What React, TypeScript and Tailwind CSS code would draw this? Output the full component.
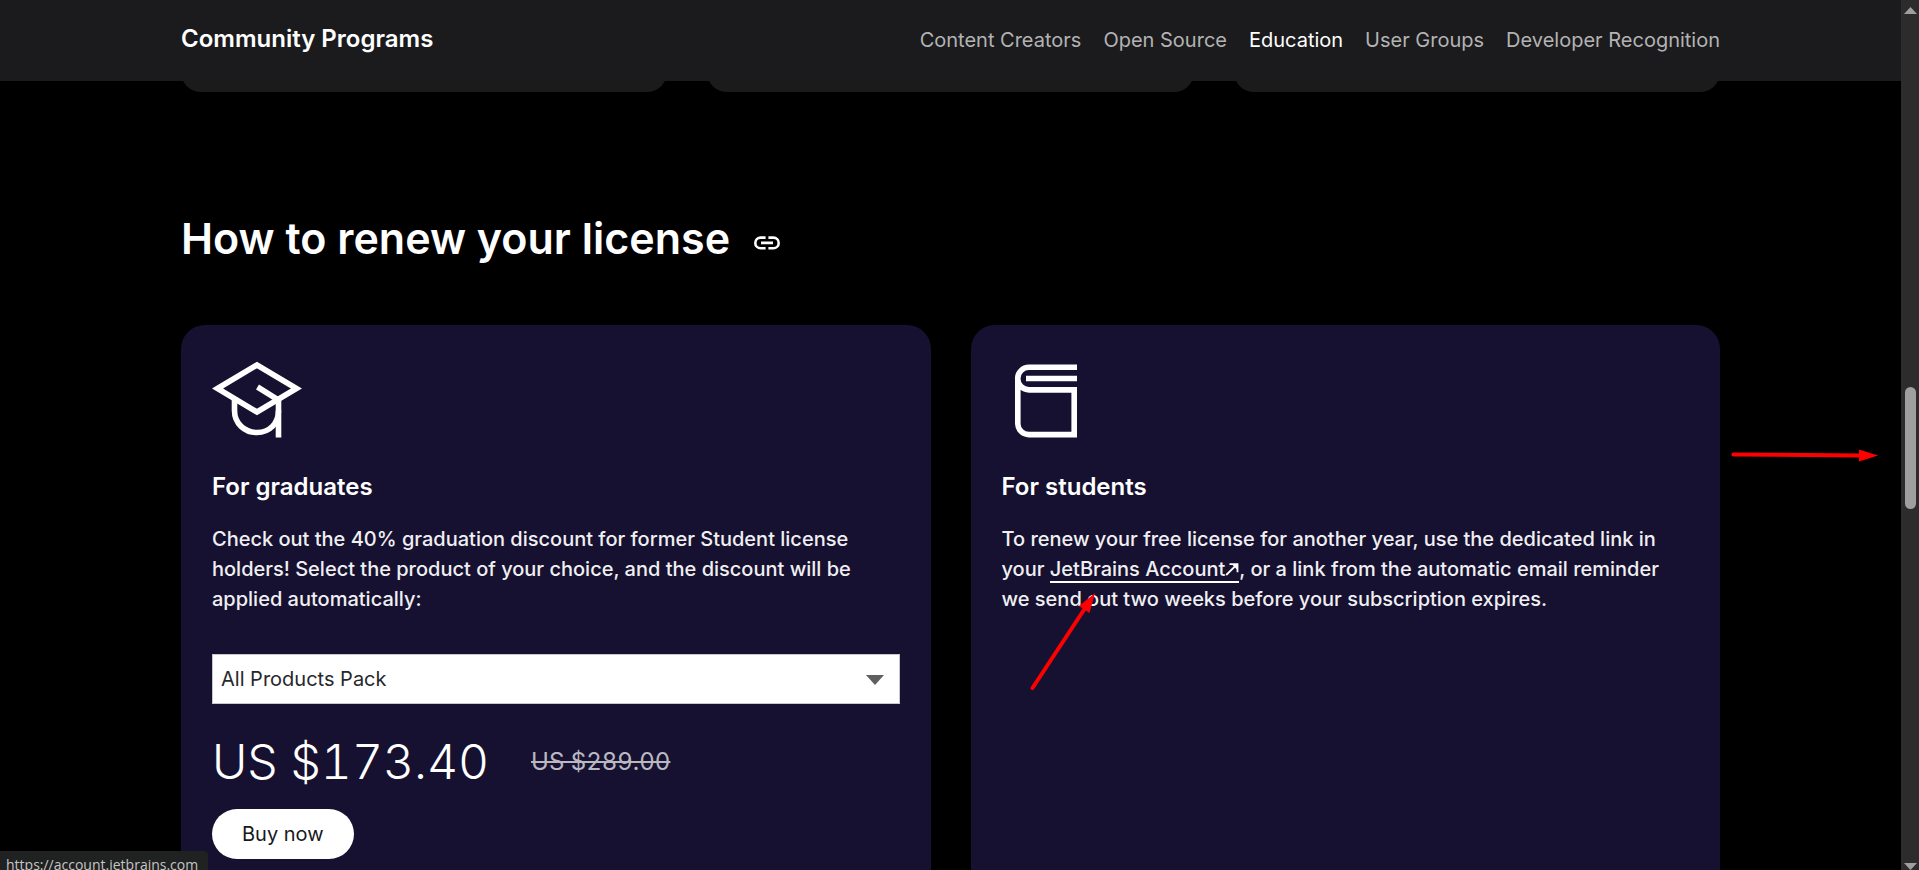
import React from "react";

const navItems = [
  { label: "Content Creators" },
  { label: "Open Source" },
  { label: "Education", active: true },
  { label: "User Groups" },
  { label: "Developer Recognition" },
];

const container = "mx-auto w-full max-w-[1539px]";

function GraduationCapIcon() {
  return (
    <svg className="h-[90px] w-[90px]" viewBox="0 0 90 90" fill="none" stroke="#fff" strokeWidth="5.6" aria-hidden="true">
      <path d="M5.5 33.5 45 10 84.5 33.5 45 57Z" />
      <path d="M45.5 32 66.5 45V82.5" />
      <path d="M22.500 44.5v11c0 13 10 22 22.500 22S66.500 68.5 66.500 55.5" />
    </svg>
  );
}

function BookIcon() {
  return (
    <svg className="h-[90px] w-[90px]" viewBox="0 0 90 90" fill="none" stroke="#fff" strokeWidth="5.6" aria-hidden="true">
      <path d="M75 12.3H27a11.3 11.3 0 0 0 0 22.6H72.2V79.6H27A11 11 0 0 1 15.8 69V23" />
      <path d="M24 23.5H75" />
    </svg>
  );
}

function LinkIcon() {
  return (
    <svg className="h-[14px] w-[26px]" viewBox="0 0 26 14" fill="none" stroke="#fff" strokeWidth="2.6" aria-hidden="true">
      <path d="M11.6 1.6H6.6a5.3 5.3 0 0 0 0 10.6h5M14.4 1.6h5a5.3 5.3 0 0 1 0 10.6h-5M7 6.9H19" />
    </svg>
  );
}

function ExternalArrow() {
  return (
    <svg className="inline-block h-[13px] w-[14px] align-baseline" viewBox="0 0 14 13" fill="none" stroke="#fff" strokeWidth="1.8" aria-hidden="true">
      <path d="M1.2 12 12 1.4M4.5 1.2h8v8" />
      <path d="M6.5 1H13v6.5Z" fill="#fff" stroke="none" />
    </svg>
  );
}

export default function App() {
  return (
    <div className="flex h-screen overflow-hidden bg-black font-['Inter','Liberation_Sans',sans-serif] text-white">
      <div className="relative min-w-0 flex-1 overflow-hidden">
        <header className="bg-[#1b1b1d]">
          <div className={`${container} flex h-[81px] items-center justify-between`}>
            <span className="pb-1 text-2xl font-semibold">Community Programs</span>
            <nav className="flex gap-[22px] pb-0.5 text-xl">
              {navItems.map((item) => (
                <a key={item.label} href="#" className={item.active ? "text-white" : "text-[#b3b3b4]"}>
                  {item.label}
                </a>
              ))}
            </nav>
          </div>
        </header>

        <main className={container}>
          <div className="grid grid-cols-3 gap-10 overflow-hidden">
            {[0, 1, 2].map((i) => (
              <div key={i} className="h-[11px] overflow-hidden">
                <div className="-mt-10 h-[51px] rounded-[20px] bg-[#1b1b1b]" />
              </div>
            ))}
          </div>

          <h2 className="mt-[119px] flex items-center gap-6 text-[43px] leading-[54px] font-semibold">
            How to renew your license
            <a href="#renew" aria-label="Link to this section" className="pt-2.5">
              <LinkIcon />
            </a>
          </h2>

          <div id="renew" className="mt-[60px] grid grid-cols-2 gap-10">
            <section className="rounded-3xl bg-[#161130] px-[31px] pt-[30px] pb-20">
              <GraduationCapIcon />
              <h3 className="mt-[26px] text-2xl leading-8 font-semibold">For graduates</h3>
              <p className="mt-[21px] text-xl leading-[30px] font-[450] text-[#f0eff2]">
                Check out the 40% graduation discount for former Student license holders! Select the product of your
                choice, and the discount will be applied automatically:
              </p>
              <div className="relative mt-10">
                <select
                  aria-label="Product"
                  className="h-[50px] w-full appearance-none border border-[#c8c8cc] bg-white pl-2 text-xl text-[#27282c]"
                >
                  <option>All Products Pack</option>
                </select>
                <svg className="pointer-events-none absolute top-[21px] right-4 h-[10px] w-[18px]" viewBox="0 0 18 10" aria-hidden="true">
                  <path d="M0 0H18L9 10Z" fill="#5f5f61" />
                </svg>
              </div>
              <div className="mt-[25px] flex items-center gap-[42px] tabular-nums">
                <span className="text-5xl leading-[66px] font-light">US $173.40</span>
                <s className="text-2xl text-[#b9b8c1]">US $289.00</s>
              </div>
              <button className="mt-[14px] h-[50px] rounded-full bg-white px-[30px] text-xl text-[#19191c]">Buy now</button>
            </section>

            <section className="relative rounded-3xl bg-[#161130] px-[31px] pt-[30px] pb-20">
              <BookIcon />
              <h3 className="mt-[26px] text-2xl leading-8 font-semibold">For students</h3>
              <p className="mt-[21px] text-xl leading-[30px] font-[450] text-[#f0eff2]">
                To renew your free license for another year, use the dedicated link in your{" "}
                <a href="https://account.jetbrains.com" className="border-b-2 border-white">
                  JetBrains Account
                  <ExternalArrow />
                </a>
                , or a link from the automatic email reminder we send out two weeks before your subscription expires.
              </p>
              <svg className="pointer-events-none absolute top-[266px] left-[58px] h-[100px] w-[70px]" viewBox="0 0 70 100" aria-hidden="true">
                <path d="M3.5 97 55.5 18" stroke="#f00" strokeWidth="4" strokeLinecap="round" />
                <path d="M66 2 60.5 22 50 15Z" fill="#f00" />
              </svg>
              <svg className="pointer-events-none absolute top-[122px] -right-[159px] h-4 w-[148px]" viewBox="0 0 148 16" aria-hidden="true">
                <path d="M2.5 7.5 130 8.5" stroke="#f00" strokeWidth="4" strokeLinecap="round" />
                <path d="M128 2.5V14.5L147 8.5Z" fill="#f00" />
              </svg>
            </section>
          </div>
        </main>

        <div className="absolute bottom-0 left-0 h-[19px] overflow-hidden rounded-tr bg-[#202121] pr-[10px] pl-[6px] font-['Open_Sans',sans-serif] text-sm leading-7 text-[#c4c5c5]">
          https://account.jetbrains.com
        </div>
      </div>

      <div className="relative flex w-[18px] shrink-0 flex-col items-center justify-between bg-[#2c2c2c] pt-[7px]" aria-hidden="true">
        <svg className="h-[7px] w-[13px]" viewBox="0 0 13 7">
          <path d="M0 7 6.5 0 13 7Z" fill="#9f9f9f" />
        </svg>
        <div className="absolute top-[387px] h-[122px] w-[11px] rounded-full bg-[#9f9f9f]" />
        <svg className="h-[7px] w-[13px]" viewBox="0 0 13 7">
          <path d="M0 0 6.5 7 13 0Z" fill="#9f9f9f" />
        </svg>
      </div>
    </div>
  );
}
